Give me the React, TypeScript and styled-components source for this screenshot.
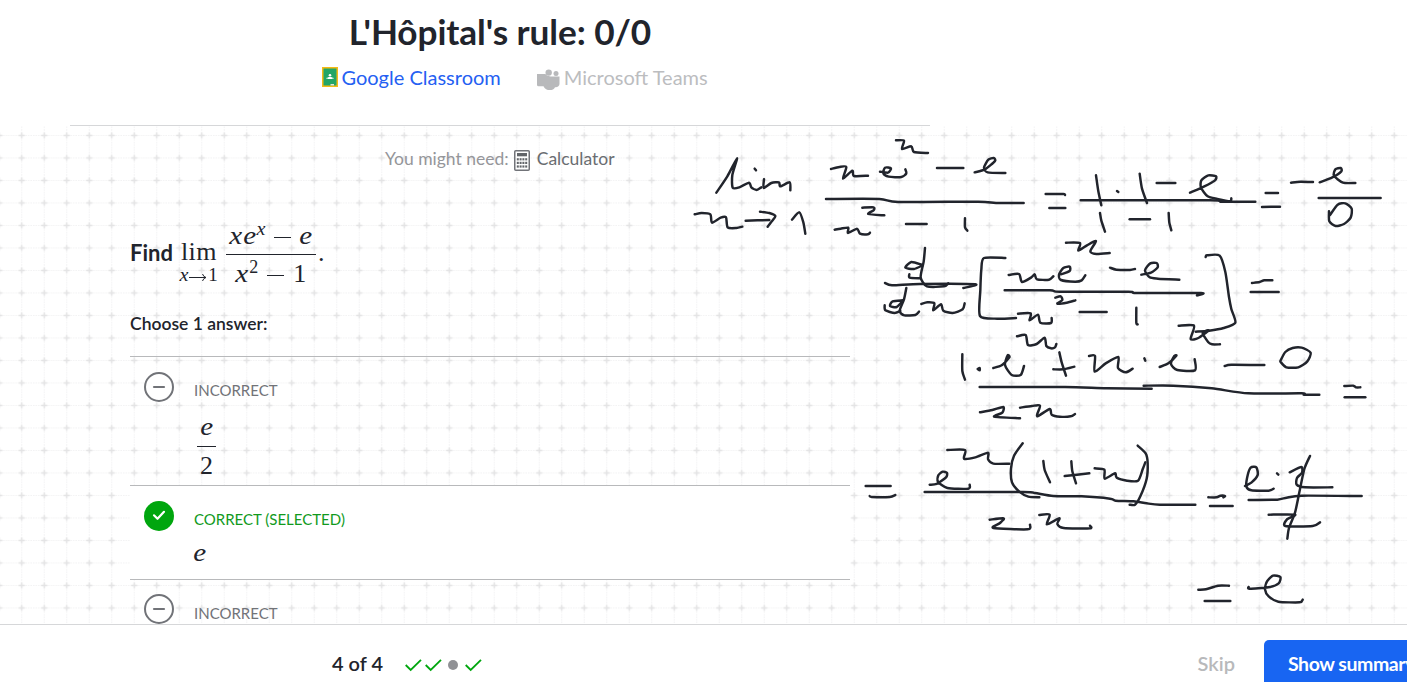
import React from "react";
import styled, { createGlobalStyle } from "styled-components";

const GlobalStyle = createGlobalStyle`
  * { box-sizing: border-box; }
  body { margin: 0; background: #fff; color: #21242c; font-family: Lato, sans-serif; overflow: hidden; }
`;

const Page = styled.div`
  position: relative;
  width: 1407px;
  height: 682px;
  overflow: hidden;
  display: flex;
  flex-direction: column;
`;

const Header = styled.header`
  width: 860px;
  height: 126px;
  margin-left: 70px;
  border-bottom: 1px solid #d6d7d9;
  display: flex;
  flex-direction: column;
  align-items: center;
  flex: none;
`;

const Title = styled.h1`
  margin: 8px 0 0;
  font-size: 35.2px;
  line-height: 46px;
  font-weight: 700;
  letter-spacing: -0.08px;
  white-space: nowrap;
`;

const ShareLinks = styled.div`
  display: flex;
  align-items: center;
  height: 28px;
  margin-top: 9px;
  width: 387px;
  margin-left: 30px;
`;

const ShareLink = styled.a<{ $muted?: boolean }>`
  display: flex;
  align-items: center;
  gap: 4px;
  font-size: 20px;
  font-weight: 400;
  line-height: 28px;
  white-space: nowrap;
  color: ${(p) => (p.$muted ? "#bcbdbf" : "#2460f2")};
  margin-left: ${(p) => (p.$muted ? "36px" : "0")};
`;

const Work = styled.main`
  position: relative;
  height: 498px;
  flex: none;
  overflow: hidden;
`;

const Layer = styled.svg<{ $top?: string }>`
  position: absolute;
  left: 0;
  top: ${(p) => p.$top || "0"};
  pointer-events: none;
`;

const Exercise = styled.section`
  position: relative;
  width: 720px;
  margin-left: 130px;
  display: flex;
  flex-direction: column;
`;

const Hint = styled.div`
  display: flex;
  align-items: center;
  height: 24px;
  margin: 20px 0 0 255px;
  font-size: 17.5px;
  color: #95969a;
  white-space: nowrap;
  svg { margin: 5px 7px 0 5px; }
`;

const ToolName = styled.span`
  color: #6a6d71;
`;

const Question = styled.div`
  display: flex;
  align-items: center;
  height: 72px;
  margin-top: 47px;
  font-size: 22px;
  font-weight: 700;
`;

const Verb = styled.span`
  padding-bottom: 2px;
`;

const MathText = styled.span<{ $size?: number; $upright?: boolean }>`
  display: inline-block;
  font-family: "Liberation Serif", serif;
  font-style: ${(p) => (p.$upright ? "normal" : "italic")};
  font-weight: 400;
  font-size: ${(p) => p.$size || 26}px;
  line-height: 30px;
  white-space: pre;
  transform: ${(p) => (p.$upright ? "none" : "scaleX(1.12)")};
`;

const Limit = styled.span`
  display: flex;
  flex-direction: column;
  align-items: center;
  width: 40px;
  margin: 16px 0 0 6px;
`;

const Lim = styled(MathText)`
  line-height: 26px;
  letter-spacing: 0.4px;
`;

const Under = styled.span`
  display: flex;
  align-items: center;
  height: 16px;
  margin-top: 2px;

  ${MathText} {
    line-height: 16px;
  }
`;

const Arrow = styled.svg`
  margin: 4px 1px 0;
`;

const Fraction = styled.span<{ $width: number; $gap?: number }>`
  display: flex;
  flex-direction: column;
  align-items: center;
  width: ${(p) => p.$width}px;
  margin-left: ${(p) => p.$gap || 0}px;
`;

const Term = styled.span<{ $line?: boolean; $height: number; $drop?: number }>`
  display: flex;
  align-items: center;
  justify-content: center;
  width: 100%;
  height: ${(p) => p.$height}px;
  padding-top: ${(p) => p.$drop || 0}px;
  border-bottom: ${(p) => (p.$line ? "1px solid #21242c" : "0")};
`;

const Base = styled(MathText)`
  margin-right: 2px;
`;

const Sup = styled(MathText)`
  margin-bottom: 14px;
`;

const Stop = styled(MathText)`
  margin: 0 0 0 2px;
`;

const Minus = styled.span`
  width: 17px;
  height: 1px;
  margin: 3px 9px 0 9px;
  background: #21242c;
`;

const Choose = styled.div`
  margin-top: 24px;
  height: 22px;
  line-height: 22px;
  font-size: 17.5px;
  font-weight: 600;
`;

const Choices = styled.ul`
  list-style: none;
  padding: 0;
  margin: 21px 0 0;
`;

const Choice = styled.li<{ $height: number; $filled?: boolean }>`
  display: flex;
  align-items: flex-start;
  height: ${(p) => p.$height}px;
  padding: 15px 0 0 14px;
  border-top: 1px solid #b8b9bb;
  background: ${(p) => (p.$filled ? "#fff" : "transparent")};
`;

const Answer = styled.div`
  display: flex;
  flex-direction: column;
  align-items: flex-start;
  margin: 8px 0 0 20px;
`;

const Status = styled.span<{ $correct?: boolean }>`
  font-size: 15px;
  line-height: 20px;
  color: ${(p) => (p.$correct ? "#119a1d" : "#717378")};
`;

const AnswerBody = styled.div<{ $inset?: boolean }>`
  display: flex;
  margin: ${(p) => (p.$inset ? "8px 0 0 3px" : "9px 0 0")};
`;

const Footer = styled.footer`
  position: relative;
  flex: none;
  height: 58px;
  background: #fff;
  border-top: 1px solid #d6d7d9;
  display: flex;
  align-items: flex-start;
`;

const Progress = styled.div`
  margin: 24px 0 0 332px;
  width: 73px;
  font-size: 20px;
  font-weight: 600;
  line-height: 28px;
  white-space: nowrap;
`;

const Marks = styled.svg`
  margin-top: 31px;
`;

const Skip = styled.button`
  margin: 24px 0 0 auto;
  padding: 0;
  border: 0;
  background: none;
  font: 600 20px/28px Lato, sans-serif;
  color: #b8b9bb;
`;

const Summary = styled.button`
  margin: 15px 0 0 29px;
  width: 143px;
  height: 50px;
  padding: 0 0 2px 24px;
  border: 0;
  border-radius: 5px 0 0 5px;
  background: #1865f2;
  color: #fff;
  font: 700 19.5px/46px Lato, sans-serif;
  letter-spacing: -0.45px;
  text-align: left;
  white-space: nowrap;
  overflow: hidden;
`;

/* Each group holds pen strokes as "x,y" point lists in third-of-a-pixel units. */
const ink: { x: number; y: number; strokes: string[] }[] = [
  {
    x: 690, y: 125,
    strokes: [
      "79,203 112,154 141,100 127,150 128,188 148,187 177,173 184,187 200,195 214,187",
      "194,131 198,136",
      "222,163 221,189 244,174 267,172 271,184 299,172 301,196",
      "14,268 35,264 61,268 66,293 92,278 108,277 113,307 139,309 157,305",
      "167,287 238,285", "210,260 238,264 256,273 243,292 233,305",
      "306,284 328,262 340,292 346,326",
      "423,132 448,126 469,126 459,161 487,137 492,153 534,152",
      "570,140 594,143 603,130 585,128 580,145 596,155 634,156 649,145 646,133",
      "618,46 642,47 636,72 664,64 672,81 714,84",
      "741,129 820,129",
      "854,142 885,133 915,108 911,99 895,104 882,128 893,142 946,144",
      "408,222 568,222 625,231 865,230 918,234 1001,234",
      "517,248 551,247 551,256 535,267 583,271",
      "434,314 452,311 475,308 474,324 501,311 510,326 534,328 540,323",
      "648,297 710,297", "825,280 825,307 832,317",
    ],
  },
  {
    x: 1040, y: 130,
    strokes: [
      "17,192 70,192 75,195", "28,234 76,234", "168,136 175,184 184,226", "231,183 235,186",
      "299,131 306,176 321,219", "350,159 406,159",
      "450,188 493,169 525,151 528,139 505,136 484,151 483,173 503,199 532,207 570,214 574,205",
      "122,211 510,211 545,215 646,215", "180,249 184,272 195,305", "269,268 330,268", "386,249 388,278 394,301",
      "677,189 714,189", "666,231 720,230", "753,158 781,155 819,156",
      "839,157 877,142 904,124 902,114 886,118 882,137 909,158 946,159",
      "836,204 1022,204",
      "867,244 868,274 887,288 912,282 932,263 935,236 916,220 893,224 870,255",
    ],
  },
  {
    x: 870, y: 235,
    strokes: [
      "165,39 161,80 152,127 171,154 222,154 235,145", "155,89 124,81 106,98 132,102 158,91", "118,118 119,128 151,130",
      "45,144 66,151 150,147 316,148 280,159",
      "109,159 102,193 89,228 103,241 136,240 147,230", "98,196 68,199 60,213 80,216 98,198", "44,211 46,226 74,234 91,228",
      "154,207 172,202 193,205 190,226 213,208 220,227 248,234 278,223 284,205",
      "406,69 342,69 334,104 331,166 330,243 382,251 438,249",
      "588,23 630,24 625,47 651,31 678,18 661,49 679,57 719,54",
      "416,120 447,117 456,141 484,127 494,118 501,133 537,134 550,124",
      "573,118 599,108 599,95 580,99 567,119 573,135 615,140 635,136 646,121",
      "720,98 739,104 780,105 795,102",
      "814,119 843,113 863,97 860,84 841,85 825,106 839,127 864,131 928,134",
      "404,166 540,166 570,170 775,170 800,174 993,174 981,181",
      "556,188 572,184 577,195 562,206 590,203 616,196",
      "444,236 482,235 479,256 504,239 511,263 543,264 545,249",
      "629,231 710,231", "799,218 799,264 803,268",
      "1007,66 1011,61 1049,62 1066,111 1077,186 1084,222 1096,263 1061,279 1017,287 977,290",
      "926,272 972,272 962,312 985,309 1016,286 998,294 1015,322 1026,328 1050,328",
      "1146,144 1169,141 1183,136 1207,136", "1142,171 1226,171",
    ],
  },
  {
    x: 940, y: 315,
    strokes: [
      "231,64 257,60 264,90 290,87 314,68 319,93 333,100 345,97 349,87",
      "67,118 67,168 75,194", "113,162 119,159 119,166 113,162",
      "160,159 185,151 208,127 203,121 195,150 215,180 242,180 252,153",
      "358,112 365,142 378,182", "340,163 370,163 403,155",
      "447,123 465,123 464,170 497,145 535,126 534,159 557,172 578,161",
      "613,130 616,137", "659,156 685,145 709,122 703,123 693,147 712,165 765,166 764,133",
      "854,153 874,149 973,150", "1021,138 1036,111 1058,99 1085,98 1112,113 1102,139 1075,157 1039,157 1021,140",
      "119,216 375,216 500,220 635,221", "611,212 700,212 815,220 925,235 1085,235 1092,239 1138,239",
      "120,292 157,285 190,276 187,293 163,305 240,310",
      "240,278 276,273 300,272 291,304 329,282 335,299 360,305 392,304 405,297",
      "1213,213 1240,212 1248,217 1261,217", "1214,247 1276,247",
    ],
  },
  {
    x: 850, y: 430,
    strokes: [
      "47,168 122,168", "59,198 65,201 119,201 136,195",
      "239,164 260,162 288,142 291,129 278,125 265,136 264,155 292,174 355,176 359,164",
      "292,60 345,60 342,86 376,82 414,68 414,88 430,101 478,101",
      "518,40 492,77 483,116 486,157 508,185 535,200 568,202",
      "580,93 584,120 600,157", "664,94 667,124 678,160", "644,138 718,130",
      "734,115 763,119 764,146 795,130 800,143 831,152 864,152 878,118 886,97",
      "863,47 887,70 893,99 890,146 871,199 855,224 839,224",
      "224,186 520,186 555,189 610,198 695,199 780,206 797,212 851,214 890,220 930,224 1036,224",
      "419,269 461,265 450,279 430,294 533,298 540,284",
      "568,255 599,254 591,283 628,265 622,282 641,294 720,295 720,287",
    ],
  },
  {
    x: 1190, y: 430,
    strokes: [
      "55,202 80,202 91,197 105,198 100,202", "60,228 128,228",
      "165,168 184,158 203,135 199,112 182,113 173,136 169,169 184,181 236,182 251,176",
      "261,130 265,134", "299,127 334,111 336,128 321,144 320,164 345,172 427,172",
      "360,78 343,117 328,187 315,248 297,294 292,326",
      "176,210 262,209 290,203 335,197 515,198",
      "236,254 315,254 291,268 286,288 368,288 390,277",
      "25,479 48,478 84,467 117,467", "44,513 121,513",
      "176,471 178,476 235,472 266,460 271,441 249,437 231,454 225,478 236,499 265,515 329,517 338,509",
    ],
  },
];

/* Joins the sampled points of a stroke with a gently rounded curve. */
function strokePath(points: string): string {
  const p = points.split(" ").map((s) => s.split(",").map(Number));
  let d = `M${p[0][0]} ${p[0][1]}`;
  const t = 0.12;
  for (let i = 0; i < p.length - 1; i++) {
    const a = p[i - 1] || p[i];
    const b = p[i];
    const c = p[i + 1];
    const e = p[i + 2] || c;
    d += ` C${b[0] + (c[0] - a[0]) * t} ${b[1] + (c[1] - a[1]) * t} ${c[0] - (e[0] - b[0]) * t} ${c[1] - (e[1] - b[1]) * t} ${c[0]} ${c[1]}`;
  }
  return d;
}

const Grid = () => (
  <Layer width="1407" height="499">
    <defs>
      <pattern id="grid" x="10.5" y="-1.8" width="22.5" height="22.5" patternUnits="userSpaceOnUse">
        <path d="M0 11.25H22.5M11.25 0V22.5" stroke="#f2f2f3" strokeWidth="1" strokeDasharray="1.5 1" />
        <path d="M8.2 11.25H14.3M11.25 8.2V14.3" stroke="#e3e3e4" strokeWidth="1.5" />
      </pattern>
    </defs>
    <rect width="1407" height="499" fill="url(#grid)" />
  </Layer>
);

const Handwriting = () => (
  <Layer width="1407" height="682" $top="-126px">
    <g fill="none" stroke="#21242c" strokeWidth="7.4" strokeLinecap="round" strokeLinejoin="round">
      {ink.map((g, i) => (
        <g key={i} transform={`translate(${g.x} ${g.y}) scale(.33333)`}>
          {g.strokes.map((s, j) => <path key={j} d={strokePath(s)} />)}
        </g>
      ))}
    </g>
  </Layer>
);

const ClassroomIcon = () => (
  <svg width="16" height="20" viewBox="0 0 16 20">
    <path fill="#f5ba15" d="M0 0h16v20H0z" />
    <path fill="#23a566" d="M1.5 1.5h13v17h-13z" />
    <circle cx="8" cy="8.2" r="1.3" fill="#fff" />
    <path fill="#fff" d="M5 12v-.6c0-1 2-1.4 3-1.4s3 .4 3 1.4v.6z" />
    <path fill="#8bcfae" d="M4 11.9v-.4c0-.7.8-1 1.5-1v1.4zM12 11.9v-.4c0-.7-.8-1-1.5-1v1.4z" />
    <path fill="#e5e5d8" d="M8.5 17H12v1.5H8.5z" />
  </svg>
);

const TeamsMark = styled.svg`
  margin-top: 5px;
`;

const TeamsIcon = () => (
  <TeamsMark width="23" height="22" viewBox="0 0 23 22">
    <g fill="#b8b9bb">
      <circle cx="11.7" cy="3.6" r="3.2" />
      <circle cx="19" cy="4.5" r="2.5" />
      <path d="M0 5h8.5c1 2 5 2.500 7 2.500h7v7.500c0 2-2 3.500-4.500 3.200-1.500 4-9.500 4-11.500-1H1.500Q0 17.200 0 15.700z" />
    </g>
  </TeamsMark>
);

const CalculatorIcon = () => (
  <svg width="16" height="21" viewBox="0 0 16 21">
    <rect x=".75" y=".75" width="14.5" height="19.5" rx="1" fill="#fff" stroke="#717378" strokeWidth="1.5" />
    <path fill="#626569" d="M3 3h10v3.3H3z" />
    {[8.2, 11.8, 15.4].map((y) =>
      [2.8, 5.6, 8.4, 11.2].map((x) => <rect key={`${x}-${y}`} x={x} y={y} width="2" height="2.2" fill="#626569" />)
    )}
  </svg>
);

const Badge = styled.svg<{ $raised?: boolean }>`
  flex: none;
  margin-top: ${(p) => (p.$raised ? "-1px" : "0")};
`;

const WrongIcon = ({ raised }: { raised?: boolean }) => (
  <Badge $raised={raised} width="30" height="30" viewBox="0 0 30 30">
    <circle cx="15" cy="15" r="14" fill="#fff" stroke="#717378" strokeWidth="2" />
    <path d="M10 15h10" stroke="#717378" strokeWidth="2.2" strokeLinecap="round" />
  </Badge>
);

const RightIcon = () => (
  <Badge width="30" height="30" viewBox="0 0 30 30">
    <circle cx="15" cy="15" r="15" fill="#00a60e" />
    <path d="M10 14.3l3.5 3.5 6.5-7" fill="none" stroke="#fff" strokeWidth="2.2" strokeLinecap="round" strokeLinejoin="round" />
  </Badge>
);

export default function App() {
  return (
    <Page>
      <GlobalStyle />
      <Header>
        <Title>L'Hôpital's rule: 0/0</Title>
        <ShareLinks>
          <ShareLink><ClassroomIcon />Google Classroom</ShareLink>
          <ShareLink $muted><TeamsIcon />Microsoft Teams</ShareLink>
        </ShareLinks>
      </Header>
      <Work>
        <Grid />
        <Exercise>
          <Hint>You might need:<CalculatorIcon /><ToolName>Calculator</ToolName></Hint>
          <Question>
            <Verb>Find</Verb>
            <Limit>
              <Lim $upright>lim</Lim>
              <Under>
                <MathText $size={18}>x</MathText>
                <Arrow width="18" height="9" viewBox="0 0 18 9">
                  <path d="M0 4.5h17M13.5 1q1 3 3.5 3.5-2.5.5-3.5 3.5" fill="none" stroke="#21242c" />
                </Arrow>
                <MathText $upright $size={19}>1</MathText>
              </Under>
            </Limit>
            <Fraction $width={90} $gap={7}>
              <Term $height={42} $drop={4} $line>
                <Base>x</Base><Base>e</Base><Sup $size={18}>x</Sup><Minus /><MathText>e</MathText>
              </Term>
              <Term $height={38}>
                <Base>x</Base><Sup $upright $size={18}>2</Sup><Minus /><MathText $upright>1</MathText>
              </Term>
            </Fraction>
            <Stop $upright>.</Stop>
          </Question>
          <Choose>Choose 1 answer:</Choose>
          <Choices>
            <Choice $height={129}>
              <WrongIcon />
              <Answer>
                <Status>INCORRECT</Status>
                <AnswerBody $inset>
                  <Fraction $width={19}>
                    <Term $height={39} $line><MathText>e</MathText></Term>
                    <Term $height={38}><MathText $upright>2</MathText></Term>
                  </Fraction>
                </AnswerBody>
              </Answer>
            </Choice>
            <Choice $height={94} $filled>
              <RightIcon />
              <Answer>
                <Status $correct>CORRECT (SELECTED)</Status>
                <AnswerBody><MathText>e</MathText></AnswerBody>
              </Answer>
            </Choice>
            <Choice $height={94}>
              <WrongIcon raised />
              <Answer><Status>INCORRECT</Status></Answer>
            </Choice>
          </Choices>
        </Exercise>
        <Handwriting />
      </Work>
      <Footer>
        <Progress>4 of 4</Progress>
        <Marks width="78" height="18" viewBox="0 0 78 18">
          <g fill="none" stroke="#00a60e" strokeWidth="1.8">
            <path d="M.7 9l5 5L16 3.8" /><path d="M20.7 9l5 5L36 3.8" /><path d="M60.7 9l5 5L76 3.8" />
          </g>
          <circle cx="48" cy="9" r="5" fill="#909195" />
        </Marks>
        <Skip>Skip</Skip>
        <Summary>Show summary</Summary>
      </Footer>
    </Page>
  );
}
